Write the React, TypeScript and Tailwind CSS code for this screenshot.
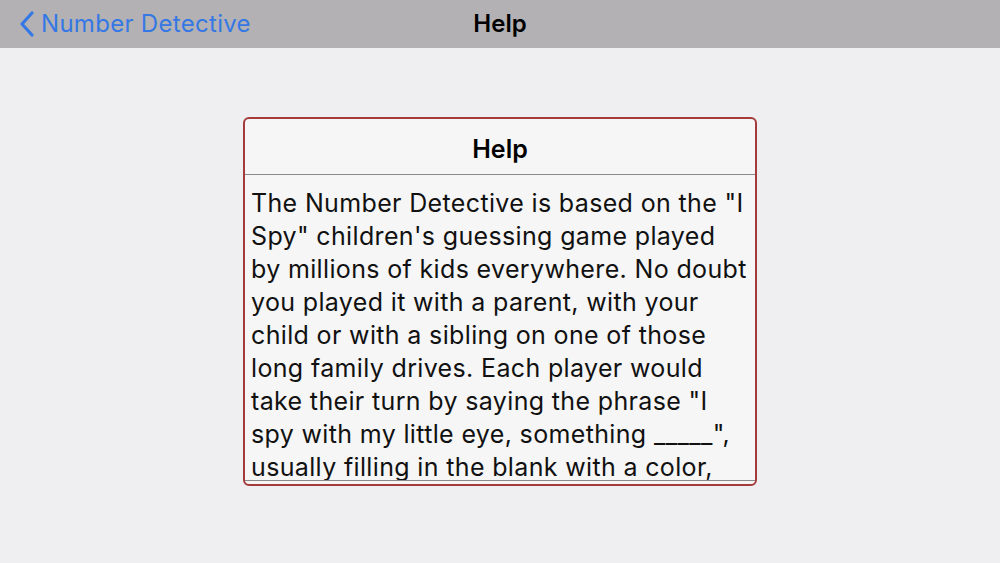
import React from "react";

export default function App() {
  const text =
    'The Number Detective is based on the "I Spy" children\'s guessing game played by millions of kids everywhere. No doubt you played it with a parent, with your child or with a sibling on one of those long family drives. Each player would take their turn by saying the phrase "I spy with my little eye, something _____", usually filling in the blank with a color, shape or some other attribute of an object that the other players could see.';
  return (
    <div className="w-[1000px] h-[563px] bg-[#efeff1] flex flex-col" style={{ fontFamily: "Inter, 'Noto Sans', sans-serif" }}>
      <div className="h-[48px] bg-[#b3b1b3] flex items-center relative shrink-0">
        <div className="flex items-center pl-[19px] text-[#3578e5]">
          <svg width="16" height="26" viewBox="0 0 16 26" fill="none">
            <path d="M13 2 L3 13 L13 24" stroke="#3578e5" strokeWidth="3.2" strokeLinecap="round" strokeLinejoin="round" />
          </svg>
          <span className="ml-[6px] text-[24px] tracking-[0.3px] leading-none">Number Detective</span>
        </div>
        <div className="absolute left-0 right-0 text-center text-[24px] font-semibold text-black leading-none pointer-events-none">Help</div>
      </div>
      <div className="flex justify-center pt-[69px]">
        <div className="w-[514px] h-[369px] border-2 border-[#a53a3a] rounded-[6px] bg-[#f6f6f6] flex flex-col overflow-hidden">
          <div className="h-[56px] pt-[6px] flex items-center justify-center text-[25px] font-semibold text-black border-b border-[#8a8a8a] shrink-0">Help</div>
          <div className="flex-1 overflow-hidden border-b border-[#8a8a8a] pl-[6px] pr-[4px] pt-[12px]">
            <p className="text-[25px] tracking-[0.35px] leading-[33px] text-[#111]">{text}</p>
          </div>
          <div className="h-[3px] shrink-0" />
        </div>
      </div>
    </div>
  );
}
